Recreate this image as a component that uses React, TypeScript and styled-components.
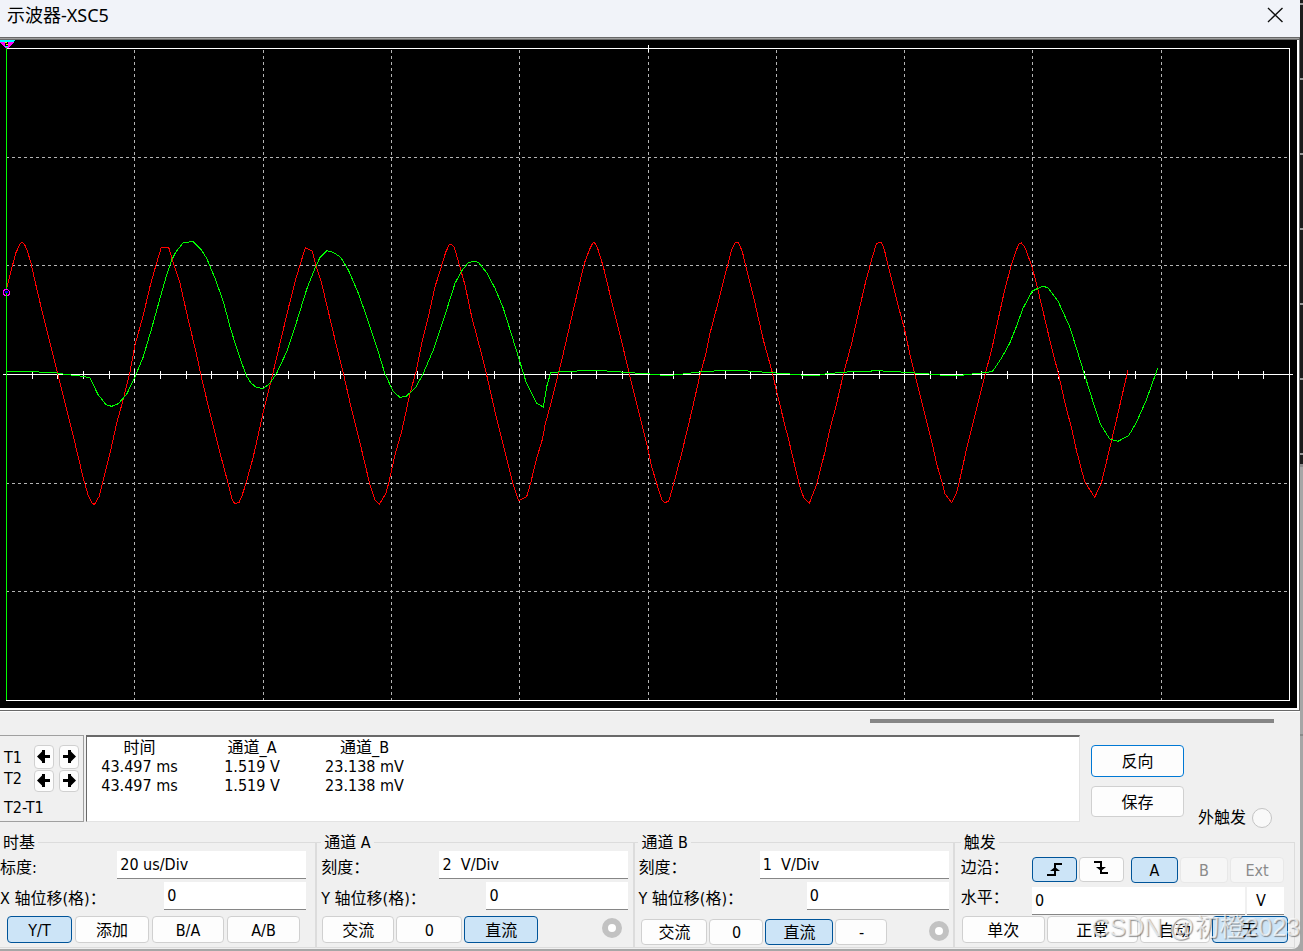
import React from "react";
import styled, { createGlobalStyle, css } from "styled-components";

const GlobalStyle = createGlobalStyle`
  *, *::before, *::after { box-sizing: border-box; }
  body {
    margin: 0;
    background: #a6a6a6;
    color: #000;
    font: 16px/20px "DejaVu Sans Condensed", "Noto Sans CJK SC", sans-serif;
  }
  button, input { font: inherit; color: inherit; margin: 0; }
`;

const Desktop = styled.div`
  position: relative;
  min-height: 100vh;
  overflow: hidden;
  padding: 0 3px 2px 0;
  background:
    linear-gradient(#8a8a8a, #8a8a8a) right 734px / 3px 2px no-repeat,
    linear-gradient(#8c8c8c, #8c8c8c) right 464px / 3px 3px no-repeat,
    repeating-linear-gradient(#1c1c1c 0 3px, #9a9a9a 3px 5px, #1c1c1c 5px 75px) right top / 3px 466px no-repeat,
    #a6a6a6;
`;

const Window = styled.main`
  background: #f0f0f0;
  border-radius: 0 0 8px 0;
  overflow: hidden;
`;

const TitleBar = styled.header`
  display: flex;
  justify-content: space-between;
  align-items: flex-start;
  height: 37px;
  padding: 0 16px 0 7px;
  background: #f1f3f9;
`;

const Title = styled.h1`
  margin: 0;
  font: 400 18px/30px "Noto Sans", "Noto Sans CJK SC", sans-serif;
`;

const CloseButton = styled.button`
  display: flex;
  padding: 7px 0 0;
  border: 0;
  background: none;
`;

const Screen = styled.section`
  padding: 0 2px 2px 0;
  border: solid #696969;
  border-width: 3px 1px 1px 0;
  border-top-style: double;
  background: linear-gradient(#a0a0a0 0 3px, #fff 3px) border-box;
`;

const Plot = styled.svg`
  display: block;
  width: 100%;
  height: auto;
  background: #000;
`;

const ScrollTrack = styled.div`
  display: flex;
  justify-content: flex-end;
  height: 24px;
  padding: 7px 26px 0 0;
  border-top: 1px solid #fff;
`;

const ScrollThumb = styled.div`
  width: 404px;
  height: 4px;
  background: #868686;
`;

const Readouts = styled.section`
  display: flex;
  align-items: flex-start;
  height: 93px;
`;

const CursorPanel = styled.div`
  display: flex;
  flex-direction: column;
  gap: 2px;
  width: 84px;
  height: 87px;
  padding: 9px 4px 0;
  border: solid #a0a0a0;
  border-width: 1px 1px 1px 0;
`;

const CursorRow = styled.div`
  display: flex;
  gap: 5px;
  height: 23px;
`;

const CursorName = styled.span<{ $raised?: boolean }>`
  width: 25px;
  line-height: ${(p) => (p.$raised ? 18 : 26)}px;
`;

const DeltaName = styled.span`
  padding-top: 3px;
`;

const Sheet = styled.div`
  flex: 1;
  height: 87px;
  margin-left: 2px;
  padding-top: 1px;
  border: 1px solid #e3e3e3;
  border-top: 2px solid #696969;
  border-left: 1px solid #696969;
  background: #fff;
`;

const Table = styled.table`
  border-collapse: collapse;
  table-layout: fixed;
  width: 330px;
  line-height: 19px;
  text-align: center;
  th, td { padding: 0; font-weight: 400; height: 19px; }
  th { width: 105px; }
  th:nth-child(2) { width: 120px; }
`;

const Side = styled.div`
  display: flex;
  align-items: flex-end;
  gap: 14px;
  width: 220px;
  padding: 10px 0 0 11px;
  height: 93px;
`;

const SideButtons = styled.div`
  display: flex;
  flex-direction: column;
  gap: 9px;
  height: 83px;
`;

const Key = styled.button<{ $w: number; $h?: number; $focus?: boolean }>`
  display: flex;
  flex: none;
  align-items: center;
  justify-content: center;
  width: ${(p) => p.$w}px;
  height: ${(p) => p.$h ?? 27}px;
  padding: 2px 0 0;
  border: 1px solid #d0d0d0;
  border-radius: 4px;
  background: #fdfdfd;
  ${(p) => p.$focus && css`border-color: #0078d4;`}
  &[aria-pressed="true"] {
    border-color: #005499;
    background: #cce4f7;
  }
  &:disabled {
    border-color: #e8e8e8;
    background: #f6f6f6;
    color: #8a8a8a;
  }
`;

const IconKey = styled(Key)<{ $lift?: number }>`
  padding: 0 0 ${(p) => p.$lift ?? 0}px;
`;

const ExternalLabel = styled.label`
  display: flex;
  align-items: center;
  gap: 6px;
  height: 20px;
`;

const Terminal = styled.input`
  appearance: none;
  flex: none;
  width: 20px;
  height: 20px;
  border: 1px solid #c4c4c4;
  border-radius: 50%;
  background: #f9f9f9;
  &:checked { border: 6px solid #c2c2c2; background: #fff; }
`;

const Groups = styled.form`
  display: grid;
  grid-template-columns: 316fr 318fr 319fr 341fr;
  margin-top: 5px;
  padding: 0 5px 1px 0;
`;

const Group = styled.fieldset<{ $left: number; $right: number; $open?: boolean }>`
  min-width: 0;
  margin: 0;
  padding: 0 ${(p) => p.$right}px 0 ${(p) => p.$left}px;
  border: 1px solid #dcdcdc;
  ${(p) => p.$open && css`border-left: 0;`}
`;

const Legend = styled.legend`
  height: 18px;
  padding: 0 3px;
  line-height: 20px;
  white-space: pre;
`;

const Row = styled.div<{ $gap?: number; $top?: number; $right?: number }>`
  display: flex;
  gap: ${(p) => p.$gap ?? 0}px;
  padding-top: ${(p) => p.$top ?? 0}px;
  padding-right: ${(p) => p.$right ?? 0}px;
`;

const SourceKeys = styled.div`
  display: flex;
  gap: 2px;
  padding-left: 5px;
`;

const Name = styled.label`
  flex: 1;
  padding-top: 7px;
  white-space: nowrap;
`;

const TriggerName = styled.label`
  flex: 1;
  padding-top: 1px;
  white-space: nowrap;
`;

const Field = styled.input<{ $w: number }>`
  flex: none;
  width: ${(p) => p.$w}px;
  height: 28px;
  padding: 0 3px;
  border: 0;
  border-bottom: 1px solid #868686;
  border-radius: 0;
  background: #fff;
  outline: 0;
`;

const UnitField = styled(Field)`
  text-align: center;
  padding-right: 12px;
`;

const Keys = styled.div<{ $gap?: number; $indent?: number; $top: number; $h: number }>`
  display: flex;
  gap: ${(p) => p.$gap ?? 2}px;
  padding: ${(p) => p.$top}px 0 0 ${(p) => p.$indent ?? 0}px;
  height: ${(p) => p.$h}px;
`;

const Port = styled(Terminal)`
  margin: 2px 6px 0 auto;
  &.flush { margin: 2px 0 0 auto; }
`;

const Watermark = styled.div`
  position: absolute;
  right: 3px;
  bottom: 8px;
  font: 25px/32px "Liberation Sans", "Noto Sans CJK SC", sans-serif;
  color: rgba(255, 255, 255, 0.7);
  text-shadow: 1px 1px 1px rgba(90, 90, 90, 0.65);
  pointer-events: none;
  white-space: nowrap;
`;

/* Sampled traces: [origin x, "x,y ..."], samples in thirds of a screen unit below y = 220. */
type Segment = [number, string];

const channelA: Segment[] = [
  [0, "20,205 34,150 47,100 60,72 66,67 73,72 82,92 93,130 110,205 130,290 150,370 174,465 200,570 225,670 250,775 265,828 275,848 283,854 297,830 310,780 330,700 350,610 372,530 390,455 405,375 430,285 450,200 468,135 484,82 506,82 520,130 540,190 565,300 590,405 605,475 630,580 655,680 685,793 697,840 704,850 717,848 725,830 738,790 760,710 790,575 815,475 840,370 865,265 885,185 900,135 916,83 937,93 947,135 965,190 985,275 1010,380 1030,460 1055,570 1085,690 1110,795 1125,840 1138,853 1158,820 1167,785 1185,705 1205,635 1230,520 1248,455 1265,370 1285,290 1305,200 1319,157"],
  [430, "37,130 47,97 58,74 63,73 73,82 88,135 105,195 125,290 150,385 170,465 195,575 225,695 250,795 266,842 290,830 303,785 320,715 338,655 345,615 360,560 384,465 400,400 415,335 430,270 450,185 463,130 478,90 488,70 493,67 502,82 520,140 545,245 575,365 600,470 625,570 652,680 665,740 683,800 695,838 703,848 716,844 730,795 755,700 785,575 810,465 828,400 840,340 865,245 885,165 905,90 916,67 925,67 937,95 950,150 975,250 1000,360 1025,450 1040,515 1067,625 1075,655 1108,795 1122,835 1138,850 1160,793 1185,695 1198,635 1220,550 1242,455 1265,370 1285,280 1307,185 1319,142"],
  [863, "21,135 30,105 40,72 48,67 56,68 65,93 75,135 90,195 105,255 124,325 140,400 157,470 180,560 205,660 222,735 238,790 246,822 266,848 280,820 290,780 310,690 335,590 355,510 370,450 388,380 405,300 425,210 445,135 458,95 468,72 475,69 485,80 507,140 525,210 545,295 565,380 586,460 605,545 627,630 640,690 665,785 695,832 715,790 740,685 765,580 795,450"],
];

const channelB: Segment[] = [
  [0, "20,454 115,454 118,457 165,458 195,463 240,468 270,473 293,522 318,554 335,559 355,551 380,523 405,470 430,410 455,325 480,235 500,165 515,120 528,95 549,69 578,64 603,88 620,115 645,175 670,245 690,320 710,385 738,465 752,488 770,503 790,505 810,490 830,460 860,395 890,305 920,208 945,145 960,112 980,92 1000,97 1022,112 1045,150 1075,220 1100,290 1130,380 1155,462 1180,515 1200,532 1218,529 1247,503 1270,460 1300,390 1319,332"],
  [430, "45,285 75,190 95,153 115,128 132,124 145,127 170,158 195,205 220,265 245,345 268,420 288,485 320,550 340,561 350,500 362,458 397,455 462,452 518,452 585,457 675,463 697,466 722,466 760,462 790,458 832,454 897,451 940,452 1010,457 1095,463 1120,466 1165,466 1190,461 1265,455 1319,454"],
  [863, "21,454 35,451 60,453 130,457 210,463 240,466 293,466 328,462 388,455 415,415 440,370 460,320 480,265 508,213 525,205 540,199 555,203 585,243 620,320 645,400 665,465 690,545 712,612 740,657 765,664 797,647 820,608 850,540 875,470 884,444"],
];

const toPoints = (segments: Segment[]) =>
  segments
    .flatMap(([origin, samples]) =>
      samples.split(" ").map((pair) => {
        const [x, y] = pair.split(",").map(Number);
        return `${(origin + x / 3).toFixed(2)},${(220 + y / 3).toFixed(2)}`;
      })
    )
    .join(" ");

const columns = [134, 263, 391, 519, 648, 776, 904, 1032, 1161];
const lines = [157, 265, 483, 591];
const ticks = Array.from({ length: 49 }, (_, i) => i + 1);

function ScopePlot() {
  return (
    <Plot viewBox="0 40 1297 668" shapeRendering="crispEdges" role="img">
      <g stroke="#b4b4b4" strokeDasharray="3 3" fill="none">
        {columns.map((x) => (
          <path key={x} d={`M${x + 0.5} 50V700`} />
        ))}
        {lines.map((y) => (
          <path key={y} d={`M6 ${y + 0.5}H1289`} />
        ))}
      </g>
      <g stroke="#fff" fill="none">
        <path d="M6.5 48.5H1289.5V700.5H6.5Z M3 374.5H1293 M648.5 45V52" />
        {ticks.map((i) => {
          const x = Math.floor(6.6 + i * 25.66) + 0.5;
          return <path key={i} d={i % 5 ? `M${x} 371V379` : `M${columns[i / 5 - 1] + 0.5} 369V383`} />;
        })}
      </g>
      <polyline points={toPoints(channelA)} fill="none" stroke="#f00" />
      <polyline points={toPoints(channelB)} fill="none" stroke="#0f0" />
      <path d="M6.5 48V700" stroke="#0f0" />
      <path d="M0 40H15L13 42H0Z" fill="#0ff" />
      <path d="M0 42H14L8 48H5L0 43Z" fill="#f0f" />
      <path d="M5 42H8V46H5Z" fill="#000" />
      <path d="M5 42H7V43H5Z M6 44H8V45H6Z" fill="#ff0" />
      <path d="M5 46H8V47H5Z" fill="#0ff" />
      <circle cx="6.5" cy="292.5" r="3" fill="#000" stroke="#f0f" />
      <path d="M5 291H8V293H5Z" fill="#00f" />
      <path d="M6 293H7V296H6Z" fill="#0f0" />
    </Plot>
  );
}

const ArrowIcon = ({ right }: { right?: boolean }) => (
  <svg width="14" height="13" viewBox="0 0 14 13" aria-hidden="true">
    <path
      d={
        right
          ? "M14 6.5 9 1.5V0H6V5H1V8H6V13H9V11.5Z"
          : "M0 6.5 5 1.5V0H8V5H13V8H8V13H5V11.5Z"
      }
    />
  </svg>
);

const EdgeIcon = ({ falling }: { falling?: boolean }) => (
  <svg width="15" height="13" viewBox="0 0 15 13" aria-hidden="true">
    {falling ? (
      <>
        <path d="M0 1H7V12H14" fill="none" stroke="#000" strokeWidth="2" />
        <path d="M2 6H12L7 10Z" />
      </>
    ) : (
      <>
        <path d="M0 12H8V1H15" fill="none" stroke="#000" strokeWidth="2" />
        <path d="M3 8H13L8 4Z" />
      </>
    )}
  </svg>
);

function CursorKeys({ name, raised }: { name: string; raised?: boolean }) {
  return (
    <CursorRow>
      <CursorName $raised={raised}>{name}</CursorName>
      <IconKey type="button" $w={20} $h={raised ? 22 : 24} $lift={1} aria-label={`${name} ←`}><ArrowIcon /></IconKey>
      <IconKey type="button" $w={20} $h={raised ? 22 : 24} $lift={1} aria-label={`${name} →`}><ArrowIcon right /></IconKey>
    </CursorRow>
  );
}

type ScaleProps = { id: string; scaleName: string; scale: string; offsetName: string };

function ScaleRows({ id, scaleName, scale, offsetName }: ScaleProps) {
  return (
    <>
      <Row>
        <Name htmlFor={`${id}-scale`}>{scaleName}</Name>
        <Field id={`${id}-scale`} $w={189} defaultValue={scale} />
      </Row>
      <Row $top={3}>
        <Name htmlFor={`${id}-offset`}>{offsetName}</Name>
        <Field id={`${id}-offset`} $w={142} defaultValue="0" />
      </Row>
    </>
  );
}

export default function App() {
  return (
    <Desktop>
      <GlobalStyle />
      <Window>
        <TitleBar>
          <Title>示波器-XSC5</Title>
          <CloseButton type="button" aria-label="关闭">
            <svg width="17" height="16" viewBox="0 0 17 16">
              <path d="M1 1 15.500 15M15.500 1 1 15" stroke="#111" strokeWidth="1.400" />
            </svg>
          </CloseButton>
        </TitleBar>
        <Screen><ScopePlot /></Screen>
        <ScrollTrack><ScrollThumb /></ScrollTrack>
        <Readouts>
          <CursorPanel>
            <CursorKeys name="T1" />
            <CursorKeys name="T2" raised />
            <DeltaName>T2-T1</DeltaName>
          </CursorPanel>
          <Sheet>
            <Table>
              <thead>
                <tr><th>时间</th><th>通道_A</th><th>通道_B</th></tr>
              </thead>
              <tbody>
                <tr><td>43.497 ms</td><td>1.519 V</td><td>23.138 mV</td></tr>
                <tr><td>43.497 ms</td><td>1.519 V</td><td>23.138 mV</td></tr>
              </tbody>
            </Table>
          </Sheet>
          <Side>
            <SideButtons>
              <Key type="button" $w={93} $h={32} $focus>反向</Key>
              <Key type="button" $w={93} $h={31}>保存</Key>
            </SideButtons>
            <ExternalLabel>
              外触发
              <Terminal type="radio" name="external" />
            </ExternalLabel>
          </Side>
        </Readouts>
        <Groups>
          <Group $left={0} $right={9} $open>
            <Legend>时基</Legend>
            <ScaleRows id="time" scaleName="标度:" scale="20 us/Div" offsetName="X 轴位移(格)：" />
            <Keys $top={6} $h={37} $indent={7} $gap={3}>
              <Key type="button" $w={65} aria-pressed="true">Y/T</Key>
              <Key type="button" $w={74}>添加</Key>
              <Key type="button" $w={72}>B/A</Key>
              <Key type="button" $w={73}>A/B</Key>
            </Keys>
          </Group>
          <Group $left={4} $right={5}>
            <Legend>通道 A</Legend>
            <ScaleRows id="a" scaleName="刻度：" scale="2  V/Div" offsetName="Y 轴位移(格)：" />
            <Keys $top={6} $h={37} $indent={1}>
              <Key type="button" $w={72}>交流</Key>
              <Key type="button" $w={66}>0</Key>
              <Key type="button" $w={74} aria-pressed="true">直流</Key>
              <Port type="radio" name="portA" defaultChecked aria-label="通道 A" />
            </Keys>
          </Group>
          <Group $left={3} $right={4}>
            <Legend>通道 B</Legend>
            <ScaleRows id="b" scaleName="刻度：" scale="1  V/Div" offsetName="Y 轴位移(格)：" />
            <Keys $top={9} $h={37} $indent={3}>
              <Key type="button" $w={66} $h={26}>交流</Key>
              <Key type="button" $w={54} $h={26}>0</Key>
              <Key type="button" $w={68} $h={26} aria-pressed="true">直流</Key>
              <Key type="button" $w={52} $h={26}>-</Key>
              <Port className="flush" type="radio" name="portB" defaultChecked aria-label="通道 B" />
            </Keys>
          </Group>
          <Group $left={6} $right={6}>
            <Legend>触发</Legend>
            <Row $top={6} $gap={2} $right={4}>
              <TriggerName htmlFor="rising">边沿：</TriggerName>
              <IconKey id="rising" type="button" $w={45} $h={25} aria-pressed="true" aria-label="上升沿"><EdgeIcon /></IconKey>
              <IconKey type="button" $w={45} $h={25} $lift={4} aria-label="下降沿"><EdgeIcon falling /></IconKey>
              <SourceKeys>
                <Key type="button" $w={47} $h={26} aria-pressed="true">A</Key>
                <Key type="button" $w={48} $h={26} disabled>B</Key>
                <Key type="button" $w={54} $h={26} disabled>Ext</Key>
              </SourceKeys>
            </Row>
            <Row $top={4} $gap={2} $right={4}>
              <TriggerName htmlFor="level">水平：</TriggerName>
              <Field id="level" $w={213} defaultValue="0" />
              <UnitField $w={37} defaultValue="V" aria-label="单位" />
            </Row>
            <Keys $top={1} $h={32} $indent={1}>
              <Key type="button" $w={83}>单次</Key>
              <Key type="button" $w={91}>正常</Key>
              <Key type="button" $w={70}>自动</Key>
              <Key type="button" $w={76} aria-pressed="true">无</Key>
            </Keys>
          </Group>
        </Groups>
      </Window>
      <Watermark>CSDN @初橙2023</Watermark>
    </Desktop>
  );
}
